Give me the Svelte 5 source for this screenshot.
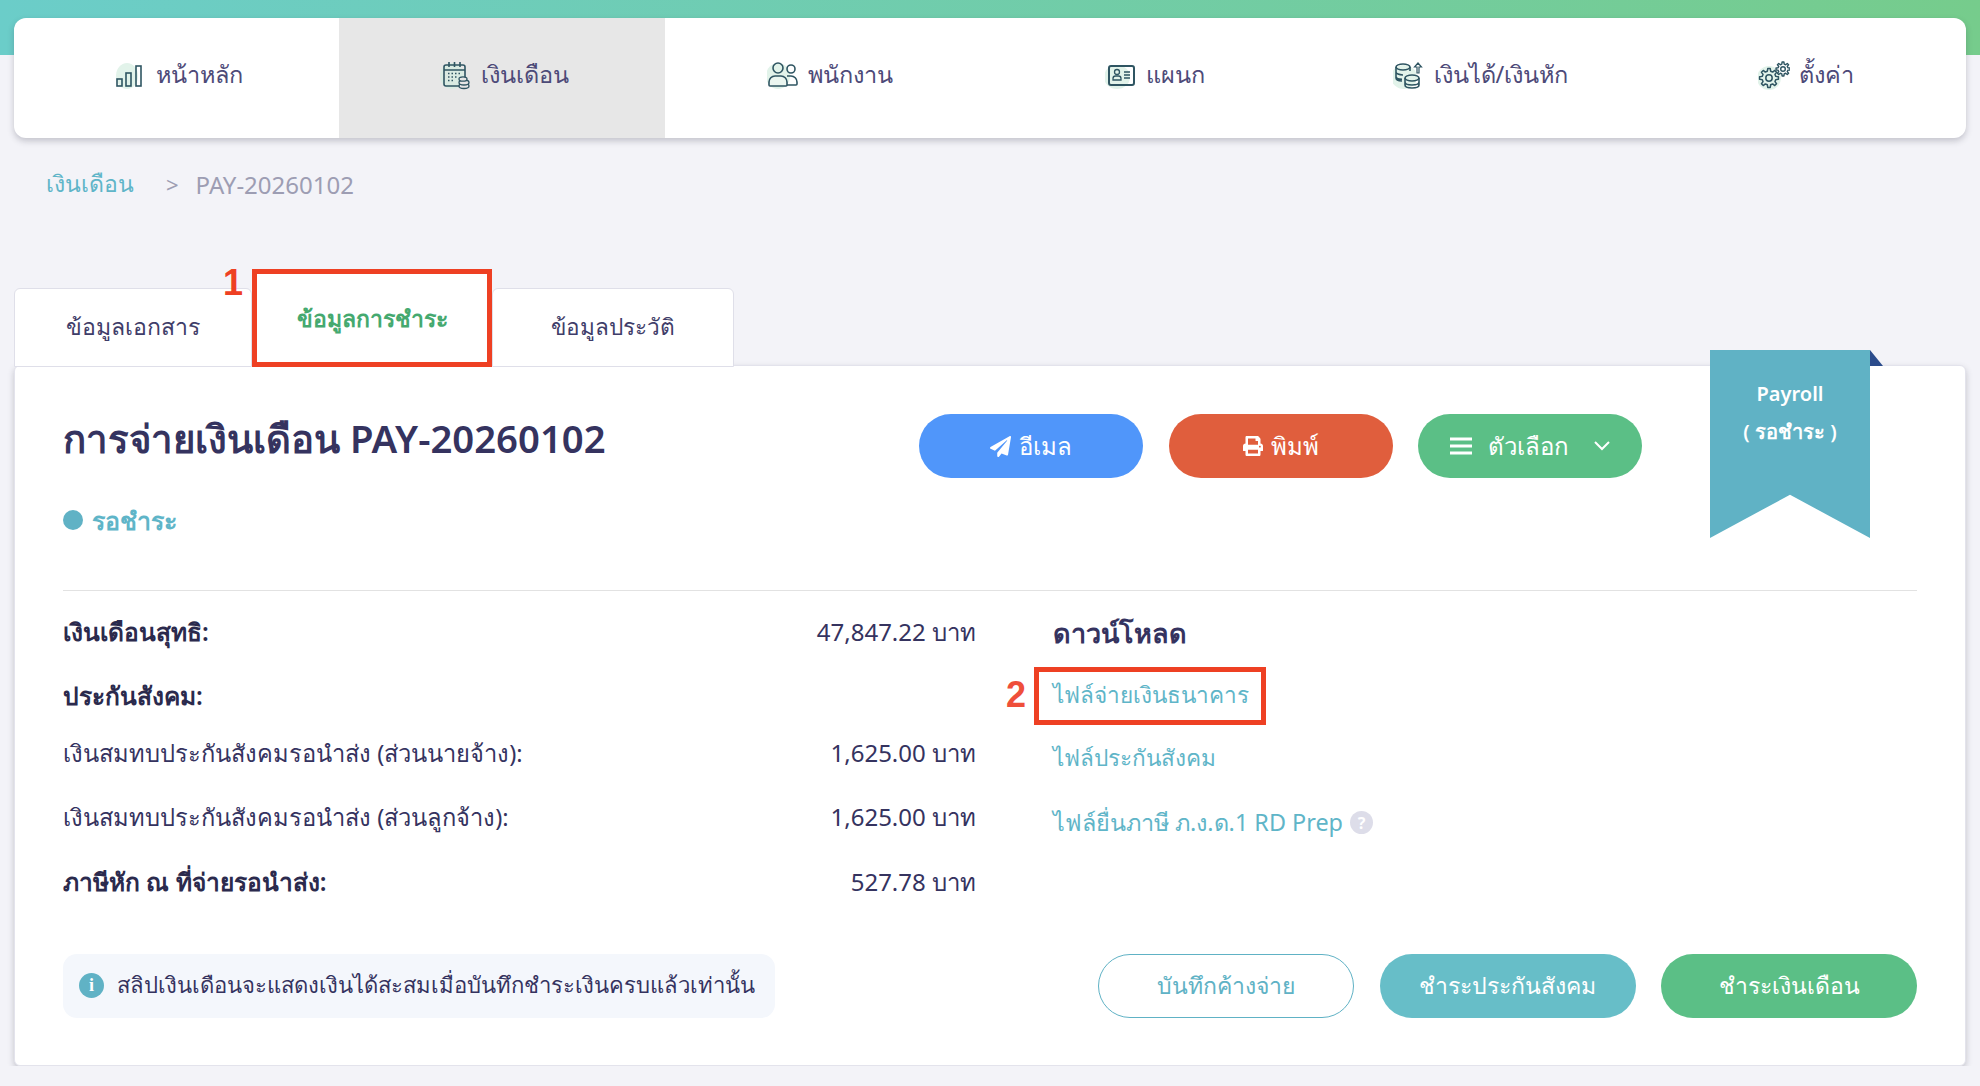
<script>
	const nav = [
		{ key: 'home', label: 'หน้าหลัก' },
		{ key: 'salary', label: 'เงินเดือน', active: true },
		{ key: 'staff', label: 'พนักงาน' },
		{ key: 'dept', label: 'แผนก' },
		{ key: 'income', label: 'เงินได้/เงินหัก' },
		{ key: 'settings', label: 'ตั้งค่า' }
	];
	const rows = [
		{ label: 'เงินเดือนสุทธิ:', value: '47,847.22 บาท', bold: true },
		{ label: 'ประกันสังคม:', value: '', bold: true },
		{ label: 'เงินสมทบประกันสังคมรอนำส่ง (ส่วนนายจ้าง):', value: '1,625.00 บาท' },
		{ label: 'เงินสมทบประกันสังคมรอนำส่ง (ส่วนลูกจ้าง):', value: '1,625.00 บาท' },
		{ label: 'ภาษีหัก ณ ที่จ่ายรอนำส่ง:', value: '527.78 บาท', bold: true }
	];

	// gear outline for the settings icon
	function gear(cx, cy, outer, inner, teeth) {
		const step = (Math.PI * 2) / teeth;
		const pts = [];
		for (let i = 0; i < teeth; i++) {
			const a = i * step;
			for (const [off, r] of [[-0.3, inner], [-0.17, outer], [0.17, outer], [0.3, inner]]) {
				const t = a + off * step;
				pts.push(`${(cx + Math.cos(t) * r).toFixed(2)} ${(cy + Math.sin(t) * r).toFixed(2)}`);
			}
		}
		return 'M' + pts.join('L') + 'Z';
	}
</script>

<div class="topbar"></div>

<div class="page">
	<nav class="nav">
		{#each nav as item}
			<a class="nav-item" class:active={item.active} href="#top">
				<svg class="nav-icon" viewBox="0 0 32 30" width="32" height="30" fill="none" stroke="#2f5562" stroke-width="1.6">
					{#if item.key === 'home'}
						<ellipse cx="12" cy="16" rx="11" ry="13" fill="#e2f3ea" stroke="none" />
						<rect x="2" y="19" width="5" height="7" />
						<rect x="11" y="13" width="5" height="13" />
						<rect x="21" y="6" width="5" height="20" />
					{:else if item.key === 'salary'}
						<ellipse cx="12" cy="16" rx="12" ry="13" fill="#d9ebe2" stroke="none" />
						<rect x="4" y="5" width="21" height="21" rx="2" />
						<path d="M4 10h21M9 2v5M14.500 2v5M20 2v5" />
						<path d="M8 13.500h12M8 17h10M8 20.500h7" stroke-dasharray="1.500 2" />
						<g fill="#e6e6e6" stroke-width="1.300">
							<ellipse cx="24" cy="26" rx="5" ry="2.500" />
							<ellipse cx="24" cy="22.500" rx="5" ry="2.500" />
							<ellipse cx="23" cy="19" rx="4" ry="2.200" />
						</g>
					{:else if item.key === 'staff'}
						<ellipse cx="11" cy="16" rx="12" ry="13" fill="#e2f3ea" stroke="none" />
						<circle cx="11" cy="8" r="5" />
						<circle cx="24" cy="9" r="4" />
						<path d="M2 25v-3a6 6 0 0 1 6-6h6a6 6 0 0 1 6 6v3a1 1 0 0 1-1 1H3a1 1 0 0 1-1-1z" fill="#fff" fill-opacity="0.3" />
						<path d="M20 25h9a1 1 0 0 0 1-1v-2a6 6 0 0 0-6-6h-4" />
					{:else if item.key === 'dept'}
						<ellipse cx="12" cy="17" rx="13" ry="12" fill="#e2f3ea" stroke="none" />
						<rect x="4" y="6" width="25" height="19" rx="2" stroke-width="2" />
						<circle cx="12" cy="12" r="2.500" stroke-width="1.300" />
						<path d="M8 20v-1.500a2.500 2.500 0 0 1 2.500-2.500h3a2.500 2.500 0 0 1 2.500 2.500V20z" stroke-width="1.300" />
						<path d="M19 12h6M19 15h6M19 18h6" stroke-width="1.300" />
					{:else if item.key === 'income'}
						<ellipse cx="11" cy="17" rx="13" ry="12" fill="#e2f3ea" stroke="none" />
						<ellipse cx="10" cy="7" rx="7" ry="3" />
						<path d="M3 7v11c0 1.600 2.500 2.800 6 3M3 12c0 1.600 3 3 7 3M3 16.500c0 1.500 3 2.700 6 2.800M17 7v4" />
						<ellipse cx="19" cy="18" rx="7" ry="3" fill="#e2f3ea" />
						<path d="M12 18v7c0 1.700 3 3 7 3s7-1.300 7-3v-7M12 22c0 1.700 3 3 7 3s7-1.300 7-3" />
						<path d="M24 13V7h-2.500L25 3l3.500 4H26v6z" stroke-width="1.200" />
					{:else}
						<ellipse cx="11" cy="18" rx="12" ry="12" fill="#e2f3ea" stroke="none" />
						<path d={gear(11, 18, 9.500, 7, 8)} stroke-width="1.500" stroke-linejoin="round" />
						<circle cx="11" cy="18" r="3.200" stroke-width="1.500" />
						<path d={gear(25, 9, 7, 5, 8)} stroke-width="1.400" stroke-linejoin="round" />
						<circle cx="25" cy="9" r="2.300" stroke-width="1.400" />
					{/if}
				</svg>
				<span>{item.label}</span>
			</a>
		{/each}
	</nav>

	<div class="breadcrumb">
		<a href="#top">เงินเดือน</a>
		<span class="sep">&gt;</span>
		<span>PAY-20260102</span>
	</div>

	<div class="tabs">
		<div class="tab first">ข้อมูลเอกสาร</div>
		<div class="tab current">
			<span class="mark-no no-1">1</span>
			<span class="mark-box"></span>
			ข้อมูลการชำระ
		</div>
		<div class="tab last">ข้อมูลประวัติ</div>
	</div>

	<section class="card">
		<div class="ribbon">
			<b>Payroll</b>
			<b>( รอชำระ )</b>
		</div>

		<header class="head">
			<div>
				<h1>การจ่ายเงินเดือน PAY-20260102</h1>
				<p class="status"><i></i>รอชำระ</p>
			</div>
			<div class="actions">
				<button class="pill blue">
					<svg viewBox="0 0 512 512" width="21" height="21" fill="#fff"><path d="M476 3.200L12.500 270.600c-18.100 10.400-15.800 35.600 2.200 43.200L121 358.400l287.300-253.200c5.500-4.900 13.300 2.600 8.600 8.300L176 407v80.500c0 23.600 28.500 32.900 42.500 15.800L282 426l124.600 52.200c14.200 6 30.400-2.900 33-18.200l72-432C515 7.800 493.300-6.800 476 3.200z" /></svg>
					อีเมล
				</button>
				<button class="pill red">
					<svg viewBox="0 0 512 512" width="20" height="20" fill="#fff"><path d="M448 192V77.250c0-8.490-3.370-16.620-9.370-22.630L393.370 9.370c-6-6-14.140-9.370-22.630-9.370H96C78.330 0 64 14.330 64 32v160c-35.350 0-64 28.650-64 64v112c0 8.840 7.160 16 16 16h48v96c0 17.670 14.330 32 32 32h320c17.670 0 32-14.330 32-32v-96h48c8.840 0 16-7.160 16-16V256c0-35.350-28.650-64-64-64zm-64 256H128v-96h256v96zm0-224H128V64h192v48c0 8.840 7.160 16 16 16h48v96zm48 72c-13.250 0-24-10.750-24-24 0-13.260 10.750-24 24-24s24 10.740 24 24c0 13.250-10.750 24-24 24z" /></svg>
					พิมพ์
				</button>
				<button class="pill green">
					<svg viewBox="0 0 24 20" width="24" height="20" fill="none" stroke="#fff" stroke-width="3"><path d="M1 3h22M1 10h22M1 17h22" /></svg>
					ตัวเลือก
					<svg class="chev" viewBox="0 0 18 12" width="18" height="12" fill="none" stroke="#fff" stroke-width="2"><path d="M2 2l7 7 7-7" /></svg>
				</button>
			</div>
		</header>

		<div class="details">
			<div class="amounts">
				{#each rows as row}
					<div class="row">
						<span class="label" class:bold={row.bold}>{row.label}</span>
						<span>{row.value}</span>
					</div>
				{/each}
			</div>
			<div class="downloads">
				<h2>ดาวน์โหลด</h2>
				<a href="#top" class="marked">
					<span class="mark-no no-2">2</span>
					ไฟล์จ่ายเงินธนาคาร
				</a>
				<a href="#top">ไฟล์ประกันสังคม</a>
				<a href="#top" class="rd">ไฟล์ยื่นภาษี ภ.ง.ด.1 RD Prep <span class="help">?</span></a>
			</div>
		</div>

		<footer class="foot">
			<div class="note">
				<span class="info">i</span>
				สลิปเงินเดือนจะแสดงเงินได้สะสมเมื่อบันทึกชำระเงินครบแล้วเท่านั้น
			</div>
			<div class="foot-actions">
				<button class="pill wide outline">บันทึกค้างจ่าย</button>
				<button class="pill wide teal">ชำระประกันสังคม</button>
				<button class="pill wide green">ชำระเงินเดือน</button>
			</div>
		</footer>
	</section>
</div>

<style>
	:global(body) {
		margin: 0;
		background: #f3f3f8;
		font-family: 'Noto Sans', 'Open Sans', sans-serif;
		color: #35335f;
	}
	a {
		color: #5fb5c8;
		text-decoration: none;
	}
	.topbar {
		height: 55px;
		margin-bottom: -37px;
		background: linear-gradient(90deg, #6bcdc9, #76cc8c);
	}
	.page {
		padding: 0 14px;
		position: relative;
	}
	.nav {
		display: grid;
		grid-template-columns: repeat(6, 1fr);
		height: 120px;
		background: #fff;
		border-radius: 12px;
		box-shadow: 0 3px 6px rgba(50, 50, 70, 0.25);
		overflow: hidden;
	}
	.nav-item {
		display: flex;
		justify-content: center;
		align-items: center;
		gap: 9px;
		padding: 0 0 7px 5px;
		font-size: 23.500px;
		color: #4d4a78;
	}
	.nav-item.active {
		background: #e7e7e7;
	}
	.breadcrumb {
		display: flex;
		align-items: center;
		height: 32px;
		margin: 30px 0 0 32px;
		font-size: 24px;
		color: #9d9db3;
	}
	.breadcrumb a {
		font-size: 23px;
	}
	.sep {
		margin: 0 17px 0 32px;
		font-size: 22px;
	}
	.tabs {
		display: flex;
		align-items: flex-end;
		height: 98px;
		margin-top: 69px;
		position: relative;
		z-index: 1;
	}
	.tab {
		display: flex;
		justify-content: center;
		align-items: center;
		box-sizing: border-box;
		height: 79px;
		width: 238px;
		padding-bottom: 2px;
		background: #fff;
		border: 1px solid #dfdfe9;
		border-radius: 6px 6px 0 0;
		font-size: 23.100px;
		color: #3f3d69;
	}
	.tab.last {
		width: 242px;
		font-size: 22.600px;
	}
	.tab.current {
		position: relative;
		width: 240px;
		height: 94px;
		padding-bottom: 3px;
		border: 0;
		font-size: 23px;
		font-weight: 600;
		color: #45a96f;
	}
	.mark-box {
		position: absolute;
		inset: -4px 0 0 0;
		border: 5px solid #ee4023;
	}
	.mark-no {
		position: absolute;
		font-family: 'Liberation Sans', sans-serif;
		font-weight: 700;
		font-size: 36px;
		line-height: 1;
		color: #ee4023;
	}
	.no-1 {
		left: -29px;
		top: -8px;
	}
	.no-2 {
		left: -47px;
		top: 14px;
		color: #ef4f3a;
	}
	.card {
		position: relative;
		box-sizing: border-box;
		height: 701px;
		margin-top: -2px;
		padding: 0 48px;
		background: #fff;
		border: 1px solid #e3e3ec;
		border-radius: 6px;
		box-shadow: 0 3px 6px rgba(50, 50, 70, 0.25);
	}
	.ribbon {
		position: absolute;
		left: 1695px;
		top: -16px;
		display: flex;
		flex-direction: column;
		align-items: center;
		gap: 10px;
		box-sizing: border-box;
		width: 160px;
		height: 188px;
		padding-top: 30px;
		background: #60b2c5;
		clip-path: polygon(0 0, 100% 0, 100% 100%, 50% 77%, 0 100%);
		color: #fff;
		font-size: 20px;
	}
	.ribbon b {
		font-weight: 600;
		line-height: 28px;
	}
	.card::before {
		content: '';
		position: absolute;
		left: 1855px;
		top: -16px;
		border-left: 13px solid #2b4c8c;
		border-top: 16px solid transparent;
		width: 0;
		height: 0;
	}
	.head {
		display: flex;
		justify-content: space-between;
		box-sizing: border-box;
		height: 225px;
		padding-right: 275px;
		border-bottom: 1px solid #e2e2e2;
	}
	h1 {
		margin: 44px 0 0;
		font-size: 38.300px;
		line-height: 56px;
		font-weight: 600;
		color: #35335f;
	}
	.status {
		display: flex;
		align-items: center;
		gap: 9px;
		margin: 34px 0 0;
		font-size: 25px;
		line-height: 40px;
		font-weight: 600;
		color: #5fb5c8;
	}
	.status i {
		width: 20px;
		height: 20px;
		border-radius: 50%;
		background: #60b2c5;
	}
	.actions {
		display: flex;
		gap: 25.500px;
		margin-top: 48px;
	}
	.pill {
		display: flex;
		justify-content: center;
		align-items: center;
		gap: 8px;
		box-sizing: border-box;
		width: 224px;
		height: 64px;
		border: 0;
		border-radius: 32px;
		color: #fff;
		font: inherit;
		font-size: 24px;
	}
	.blue {
		background: #5096fa;
	}
	.red {
		background: #e05e3d;
	}
	.green {
		background: #5bbf86;
	}
	.teal {
		background: #67bec8;
	}
	.chev {
		margin-left: 9px;
	}
	.actions .green {
		gap: 15px;
		padding-left: 6px;
	}
	.outline {
		background: #fff;
		border: 1px solid #60b2c5;
		color: #60b2c5;
	}
	.wide {
		width: 256px;
		font-size: 23px;
	}
	.details {
		display: grid;
		grid-template-columns: 913px 1fr;
		margin-top: 10px;
		font-size: 24px;
	}
	.row {
		display: flex;
		justify-content: space-between;
		align-items: center;
		height: 63.500px;
	}
	.label {
		font-size: 23.700px;
	}
	.row:nth-child(3) {
		margin-top: -6px;
	}
	.row:nth-child(5) {
		margin-top: 2px;
	}
	.label.bold {
		font-size: 24.500px;
		font-weight: 600;
		color: #2b2a4d;
	}
	.downloads {
		display: flex;
		flex-direction: column;
		align-items: flex-start;
		padding-left: 77px;
	}
	h2 {
		margin: 0;
		height: 62px;
		line-height: 64px;
		font-size: 27px;
		font-weight: 600;
	}
	.downloads a {
		position: relative;
		display: flex;
		align-items: center;
		height: 63.500px;
		gap: 7px;
		font-size: 22.600px;
		white-space: nowrap;
	}
	.downloads .rd {
		margin-top: 1px;
		font-size: 23.400px;
	}
	.marked::before {
		content: '';
		position: absolute;
		inset: 4px -17px 2px -19px;
		border: 5px solid #ee4023;
	}
	.help {
		display: inline-flex;
		justify-content: center;
		align-items: center;
		width: 23px;
		height: 23px;
		border-radius: 50%;
		background: #dddde9;
		color: #fff;
		font-size: 16px;
		font-weight: 700;
	}
	.foot {
		display: flex;
		justify-content: space-between;
		margin-top: 39px;
	}
	.note {
		display: flex;
		align-items: center;
		gap: 13px;
		box-sizing: border-box;
		width: 712px;
		height: 64px;
		padding-left: 16px;
		background: #f4f7fc;
		border-radius: 14px;
		font-size: 22.100px;
		white-space: nowrap;
	}
	.info {
		display: flex;
		justify-content: center;
		align-items: center;
		width: 25px;
		height: 25px;
		border-radius: 50%;
		background: #60b2c5;
		color: #fff;
		font-family: 'Liberation Serif', serif;
		font-size: 18px;
		font-weight: 700;
	}
	.foot-actions {
		display: flex;
		gap: 25.500px;
	}
</style>
